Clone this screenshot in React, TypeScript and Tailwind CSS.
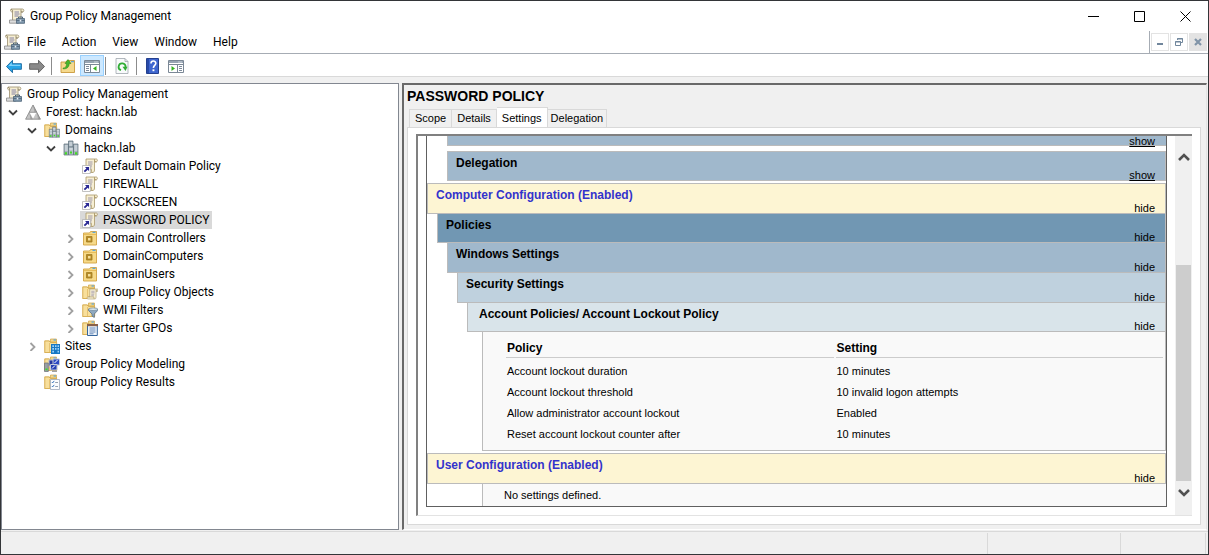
import React from "react";

type IconName =
  | "gpm" | "forest" | "domains" | "domain" | "gpo" | "ou" | "gpoFolder" | "wmi" | "starter" | "sites" | "modeling" | "results";

const Svg = ({ children }: { children: React.ReactNode }) => (
  <svg viewBox="0 0 16 16" className="size-4 shrink-0" aria-hidden="true">{children}</svg>
);

const Folder = () => (
  <>
    <path d="M.5 2.500h5l1 1h6.500v11.500H.5z" fill="#e3b95c" />
    <path d="M6.500 1h6v3h-6z" fill="#f3d88c" stroke="#d0a448" strokeWidth=".7" />
    <path d="M9.500 1.500h2.500v1H9.500z" fill="#3b9bea" />
    <path d="M.8 3h4.200l1.500 1.500h6.200v10H.8z" fill="#f8df9b" stroke="#d3a94f" strokeWidth=".8" />
    <path d="M5.500 5v9" stroke="#e6c272" />
  </>
);

const Servers = () => (
  <>
    <path d="M5.500 1h4.500v9H5.500z" fill="#a3b1bb" stroke="#596b77" strokeWidth=".7" />
    <path d="M1 4h4.500v11H1zM10.500 4H15v11h-4.500z" fill="#a3b1bb" stroke="#5c6d78" strokeWidth=".7" />
    <path d="M5.500 7h5v8h-5z" fill="#b6c2c9" stroke="#5c6d78" strokeWidth=".7" />
    <path d="M1.800 6h3M1.800 8h3M6.300 3h3M6.300 5h3M11.300 6h3M11.300 8h3M6.500 9h3M1.800 10h3M11.300 10h3" stroke="#eef2f5" strokeWidth=".9" />
    <path d="M1.800 12.200h2.200v2.200H1.800zM12 12.200h2.200v2.200H12zM7 11.500h2v2H7z" fill="#45dc25" />
  </>
);

const Scroll = () => (
  <>
    <path d="M4 1h10.500c1 0 1.300 2.500 0 2.800h-2V12c0 2-1 2.500-2 2.500H1.500c-1.500 0-1.500-3 .5-3h2z" fill="#f7efd3" stroke="#a8976a" strokeWidth=".8" />
    <path d="M12.500 1.200v2.600h2M2 11.600h7.500c0 1.500 0 2.500 1 2.900" fill="none" stroke="#a18d58" strokeWidth=".8" />
    <path d="M6 4h4.500M6 6h4.500M6 8h4M6 10h3.500" stroke="#8880a0" strokeWidth=".8" />
  </>
);

const drawings: Record<IconName, React.ReactNode> = {
  gpm: (
    <>
      <path d="M2 1h11.500c1.800 0 1.800 3 0 3H12v8.500H3.500V4C2 4 1 3 2 1z" fill="#f6eed2" stroke="#9a8d6c" strokeWidth=".8" />
      <path d="M2 1.500c1.500 0 2 1 1.500 2.500M12 1.500v2.500h2" fill="none" stroke="#8c7f60" strokeWidth=".8" />
      <path d="M5.500 4h4.500M5.500 6h5M5.500 8h4" stroke="#7774a0" strokeWidth=".9" />
      <path d="M.5 12h9v3.200h-9z" fill="#dcdcdc" stroke="#888" strokeWidth=".8" />
      <path d="M9.500 10.500V9h4v1.500" fill="none" stroke="#4a6075" />
      <path d="M7.500 10.500h8v4.800h-8z" fill="#8199ae" stroke="#4c6377" strokeWidth=".8" />
      <path d="M7.500 12.500h8" stroke="#4c6377" strokeWidth=".8" />
      <path d="M10.700 11.700h1.600v1.800h-1.600z" fill="#e8eef3" />
    </>
  ),
  forest: (
    <>
      <path d="M8 .8 15.500 15.200H.5z" fill="#c4c4c4" />
      <path d="M8 .8 12 8.300H9.500zM4.200 8.300 8 15.200H5.500zM11.800 8.300l3.700 6.900H13z" fill="#a2a2a2" />
      <path d="M4.500 8.300h7L8 14.700z" fill="#fff" />
      <path d="M8 1 15.400 15.200H.6zM4.300 8.300h7.400" fill="none" stroke="#858585" strokeWidth=".8" />
    </>
  ),
  domains: (
    <>
      <Folder />
      <g transform="translate(4.500 4.200) scale(.74)"><Servers /></g>
    </>
  ),
  domain: <Servers />,
  gpo: (
    <>
      <Scroll />
      <path d="M.5 7.500h7.800v8H.5z" fill="#fff" stroke="#a9a9a9" strokeWidth=".7" />
      <path d="M3 9h4v4L5.700 11.700 3 14.300 1.700 13l2.700-2.600z" fill="#2a2994" />
    </>
  ),
  ou: (
    <>
      <path d="M1.500 3h6l1-1.500h6v13.500h-13z" fill="#f6d988" stroke="#d2a444" strokeWidth=".9" />
      <path d="M10.500 1.800h3v1h-3z" fill="#3b9bea" />
      <path d="M2 4.500h12" stroke="#e6bd5c" />
      <path d="M4.500 6.500h5.500V12H4.500z" fill="#b58a26" stroke="#a17c22" strokeWidth=".8" />
      <path d="M6 8h2.500v2.500H6z" fill="#f7e09a" />
    </>
  ),
  gpoFolder: (
    <>
      <Folder />
      <g transform="translate(4.800 4.300) scale(.74)"><Scroll /></g>
    </>
  ),
  wmi: (
    <>
      <Folder />
      <path d="M6.500 7h9.200v1.500L12.300 12v3.500L10 14v-2L6.500 8.500z" fill="#8fa9c0" stroke="#51687e" strokeWidth=".7" />
      <ellipse cx="11.100" cy="7.200" rx="4.400" ry="1.300" fill="#dae8f2" stroke="#60788c" strokeWidth=".6" />
    </>
  ),
  starter: (
    <>
      <Folder />
      <path d="M5.500 4.500h9.800V15.500H5.500z" fill="#eef4fb" stroke="#34659c" />
      <path d="M5 4h11v2.200H5z" fill="#87604a" />
      <path d="M7.500 8h6M7.500 10h6M7.500 12h6M7.500 13.800h4" stroke="#436da4" strokeWidth=".8" />
    </>
  ),
  sites: (
    <>
      <Folder />
      <path d="M7 6h9v10H7z" fill="#1677c4" />
      <path d="M8.300 7.300h1.700V9H8.300zM11 7.300h1.500V9H11zM13.500 7.300H15V9h-1.500zM8.300 10h1.700v1.700H8.300zM11 10h1.500v1.700H11zM13.500 10H15v1.700h-1.500zM8.300 12.700h1.700v1.700H8.300zM13.500 12.700H15v1.700h-1.500z" fill="#9fd4fb" />
    </>
  ),
  modeling: (
    <>
      <Folder />
      <path d="M5 4h6v6H5z" fill="#24369d" stroke="#b9bfcf" />
      <path d="M9 3h6.500v6H9z" fill="#2b49c2" stroke="#c4cad8" />
      <path d="M6.500 8.500H13V14H6.500z" fill="#2540b4" stroke="#c5ccda" />
      <path d="m10.500 7 3-3M8 12.500l3-3" stroke="#fff" />
      <path d="M.5 7h3.800v8.500H.5z" fill="#989fa5" stroke="#686f75" strokeWidth=".7" />
      <path d="M1.500 12.500h2v1.800h-2z" fill="#3be12a" />
      <path d="M8 15.200h5" stroke="#777" />
    </>
  ),
  results: (
    <>
      <Folder />
      <path d="M6.500 5.500h9v10h-9z" fill="#fbfcfe" stroke="#9eaabd" strokeWidth=".8" />
      <path d="m7.800 8 .9.900 1.500-2M7.800 12l.9.900 1.500-2" fill="none" stroke="#2669b5" strokeWidth=".9" />
      <path d="M11.200 8.500H14M11.200 12.500H14" stroke="#8794a7" strokeWidth=".9" />
    </>
  ),
};

const Icon = ({ name }: { name: IconName }) => <Svg>{drawings[name]}</Svg>;

const Panes = ({ flip }: { flip?: boolean }) => (
  <Svg>
    <path d="M.5 2.500h15v12H.5z" fill="#fff" stroke="#7b8896" />
    <path d="M1 3h14v2H1z" fill="#97a4b3" />
    <path d="M10.500 4h1M12.500 4h1" stroke="#fff" />
    <path d={flip ? "M1 6.500h14M9.500 7v7.500" : "M1 6.500h14M6.500 7v7.500"} stroke="#7b8896" />
    {flip ? (
      <>
        <path d="M11 8.500h3M11 10.500h3M11 12.500h3" stroke="#7d8b9b" />
        <path d="M3.500 8 7 10.500 3.500 13z" fill="#35b320" />
      </>
    ) : (
      <>
        <path d="M2 8.500h3M2 10.500h3M2 12.500h3" stroke="#7d8b9b" />
        <path d="M12.500 8 9 10.500l3.500 2.500z" fill="#35b320" />
      </>
    )}
  </Svg>
);

const Arrow = ({ forward }: { forward?: boolean }) => (
  <Svg>
    {forward ? (
      <path d="M15.500 8.500 9.500 2.300v3.400H.6v5.600h8.900v3.400z" fill="#8a8a8a" stroke="#5c5c5c" strokeWidth=".9" />
    ) : (
      <>
        <path d="M.5 8.500l6-6.200v3.400h8.900v5.600H6.500v3.400z" fill="#28a4e6" stroke="#17679e" strokeWidth=".9" />
        <path d="M2.500 8 5.700 4.500v2.200h8.700V8z" fill="#81d2fa" />
      </>
    )}
  </Svg>
);

interface Node {
  label: string;
  icon: IconName;
  open?: boolean;
  closed?: boolean;
  selected?: boolean;
  children?: Node[];
}

const forest: Node = {
  label: "Forest: hackn.lab",
  icon: "forest",
  open: true,
  children: [
    {
      label: "Domains",
      icon: "domains",
      open: true,
      children: [
        {
          label: "hackn.lab",
          icon: "domain",
          open: true,
          children: [
            { label: "Default Domain Policy", icon: "gpo" },
            { label: "FIREWALL", icon: "gpo" },
            { label: "LOCKSCREEN", icon: "gpo" },
            { label: "PASSWORD POLICY", icon: "gpo", selected: true },
            { label: "Domain Controllers", icon: "ou", closed: true },
            { label: "DomainComputers", icon: "ou", closed: true },
            { label: "DomainUsers", icon: "ou", closed: true },
            { label: "Group Policy Objects", icon: "gpoFolder", closed: true },
            { label: "WMI Filters", icon: "wmi", closed: true },
            { label: "Starter GPOs", icon: "starter", closed: true },
          ],
        },
      ],
    },
    { label: "Sites", icon: "sites", closed: true },
    { label: "Group Policy Modeling", icon: "modeling" },
    { label: "Group Policy Results", icon: "results" },
  ],
};

const TreeItem = ({ node }: { node: Node }) => (
  <li role="treeitem" aria-selected={!!node.selected} aria-expanded={node.open ? true : node.closed ? false : undefined}>
    <div className="flex h-[18px] items-center gap-[3px]">
      {node.open || node.closed ? (
        <button type="button" aria-label={`Toggle ${node.label}`} className="flex h-4 w-3.5 items-center justify-center">
          <svg viewBox="0 0 10 10" className="size-2.5" fill="none" strokeWidth="1.800" aria-hidden="true">
            {node.open ? <path d="M1 3.500l4 4 4-4" stroke="#404040" /> : <path d="M3.500 2l4 4-4 4" stroke="#a0a0a0" />}
          </svg>
        </button>
      ) : (
        <span className="w-3.5" />
      )}
      <button
        type="button"
        className={`flex h-full items-center gap-[5px] whitespace-nowrap px-0.5 ${node.selected ? "bg-[#d9d9d9]" : ""}`}
      >
        <Icon name={node.icon} />
        {node.label}
      </button>
    </div>
    {node.children && (
      <ul role="group" className="pl-[19px]">
        {node.children.map((c) => <TreeItem key={c.label} node={c} />)}
      </ul>
    )}
  </li>
);

interface BarProps {
  title: string;
  action: "show" | "hide";
  className: string;
}

const Bar = ({ title, action, className }: BarProps) => (
  <div className={`flex justify-between border border-[#bbbbbb] pr-2.5 pl-2 ${className}`}>
    <h2 className="pt-[3px] text-xs leading-4 font-bold">{title}</h2>
    <a href="#report" className={`self-end pb-px leading-2 ${action === "show" ? "underline underline-offset-1" : ""}`}>{action}</a>
  </div>
);

const policies = [
  ["Account lockout duration", "10 minutes"],
  ["Account lockout threshold", "10 invalid logon attempts"],
  ["Allow administrator account lockout", "Enabled"],
  ["Reset account lockout counter after", "10 minutes"],
];

const Separator = () => <span className="h-[18px] w-px shrink-0 bg-[#8c8c8c]" />;

const Report = () => (
  <div className="mx-2 border-x border-b border-[#606060]">
    <div className="mb-[5px] ml-5 flex h-2.5 items-end justify-end border-b border-l border-[#bbbbbb] bg-[#a0b8cc] pr-[11px]">
      <a href="#report" className="leading-2 underline underline-offset-1">show</a>
    </div>
    <Bar title="Delegation" action="show" className="mb-0.5 ml-5 h-[30px] bg-[#a0b8cc]" />
    <Bar title="Computer Configuration (Enabled)" action="hide" className="h-[31px] bg-[#fdf5d3] [&>h2]:text-[#3333cc]" />
    <Bar title="Policies" action="hide" className="-mt-px ml-2.5 h-[30px] bg-[#7197b3]" />
    <Bar title="Windows Settings" action="hide" className="-mt-px ml-5 h-[31px] bg-[#a0b8cc]" />
    <Bar title="Security Settings" action="hide" className="-mt-px ml-[30px] h-[31px] bg-[#bfd1de]" />
    <Bar title="Account Policies/ Account Lockout Policy" action="hide" className="-mt-px ml-10 h-[30px] bg-[#d9e4ea] [&>h2]:pl-[3px]" />
    <div className="-mt-px mb-0.5 ml-[55px] border border-[#bbbbbb] bg-[#f9f9f9] pt-1 pb-1.5 pl-[21px]">
      <table className="w-full table-fixed border-separate border-spacing-x-0.5 border-spacing-y-0.5 text-left">
        <thead>
          <tr>
            <th scope="col" className="h-5 border-b border-[#cccccc] px-px text-xs leading-4 font-bold">Policy</th>
            <th scope="col" className="h-5 border-b border-[#cccccc] px-px text-xs leading-4 font-bold">Setting</th>
          </tr>
        </thead>
        <tbody>
          {policies.map(([policy, setting]) => (
            <tr key={policy}>
              <td className="h-[19px] px-px pt-0.5 leading-4">{policy}</td>
              <td className="h-[19px] px-px pt-0.5 leading-4">{setting}</td>
            </tr>
          ))}
        </tbody>
      </table>
    </div>
    <Bar title="User Configuration (Enabled)" action="hide" className="h-[31px] bg-[#fdf5d3] [&>h2]:text-[#3333cc]" />
    <p className="-mt-px ml-[55px] h-[23px] border-t border-l border-[#bbbbbb] bg-[#f9f9f9] pl-[21px] leading-[22px]">No settings defined.</p>
  </div>
);

const tab = "border border-[#d9d9d9] whitespace-nowrap";

export default function App() {
  return (
    <div className="flex h-screen flex-col overflow-hidden border border-[#333538] bg-[#f0f0f0] font-['Roboto','Noto_Sans',sans-serif] text-xs text-black">
      <header className="bg-white">
        <div className="flex h-[30px] items-center justify-between">
          <div className="flex items-center gap-[5px] pl-2">
            <Icon name="gpm" />
            <h1>Group Policy Management</h1>
          </div>
          <div className="flex h-full">
            <button type="button" aria-label="Minimize" className="flex w-[46px] items-center justify-center">
              <svg viewBox="0 0 11 11" className="size-[11px]" stroke="#000"><path d="M0 5.500h11" /></svg>
            </button>
            <button type="button" aria-label="Maximize" className="flex w-[46px] items-center justify-center">
              <svg viewBox="0 0 11 11" className="size-[11px]" stroke="#000" fill="none"><path d="M.5.5h10v10H.5z" /></svg>
            </button>
            <button type="button" aria-label="Close" className="flex w-[46px] items-center justify-center">
              <svg viewBox="0 0 11 11" className="size-[11px]" stroke="#000"><path d="m.5.5 10 10m0-10-10 10" /></svg>
            </button>
          </div>
        </div>
        <div className="flex h-[23px] items-center border-b border-[#a6acb4]">
          <div className="pl-[3px]"><Icon name="gpm" /></div>
          <nav className="flex flex-1 gap-4 pl-[7px]">
            {["File", "Action", "View", "Window", "Help"].map((m) => <button type="button" key={m}>{m}</button>)}
          </nav>
          <div className="flex h-full items-center gap-px border-l border-[#a6acb4] pr-px pl-px">
            <button type="button" aria-label="Minimize console" className="flex size-[18px] items-center justify-center border border-[#e3e3e3]">
              <svg viewBox="0 0 10 10" className="size-2.5"><path d="M2 6h6v2H2z" fill="#71869c" /></svg>
            </button>
            <button type="button" aria-label="Restore console" className="flex size-[18px] items-center justify-center border border-[#e3e3e3]">
              <svg viewBox="0 0 10 10" className="size-2.5" fill="none" stroke="#71869c"><path d="M3.500 3V1.500h5v4H7M1.500 4.500h5v4h-5zM3 2h6M1 5h6" /></svg>
            </button>
            <button type="button" aria-label="Close console" className="flex size-[18px] items-center justify-center bg-[#e3e3e3]">
              <svg viewBox="0 0 10 10" className="size-2.5" stroke="#8094a8" strokeWidth="2.200"><path d="m2 2 6 6m0-6-6 6" /></svg>
            </button>
          </div>
        </div>
        <div role="toolbar" aria-label="Console" className="flex h-[23px] items-center border-b border-[#d9d9d9] pt-px pl-[5px]">
          <button type="button" aria-label="Back" className="mr-[7px]"><Arrow /></button>
          <button type="button" aria-label="Forward" className="mr-1.5"><Arrow forward /></button>
          <Separator />
          <button type="button" aria-label="Up one level" className="mr-1 ml-2">
            <Svg>
              <path d="M1 4h5l1-1.500h7.500V14.500H1z" fill="#f5d98c" stroke="#c99a3c" strokeWidth=".9" />
              <path d="M11 3.200h3v1h-3z" fill="#3b9bea" />
              <path d="M3 10c3 0 3.500-2 3.500-4.500H5L8 1.500l3 4H9.200c0 3.500-2.200 5.700-6.200 5.300z" fill="#45b52b" stroke="#278315" strokeWidth=".5" />
            </Svg>
          </button>
          <button type="button" aria-label="Show console tree" aria-pressed="true" className="mr-px flex h-[21px] w-6 items-center justify-center border border-[#99d1ff] bg-[#cce8ff]">
            <Panes />
          </button>
          <Separator />
          <button type="button" aria-label="Refresh" className="mr-1.5 ml-2">
            <Svg>
              <path d="M2 .5h9l3 3v12H2z" fill="#f8fafb" stroke="#a0a6ad" strokeWidth=".8" />
              <path d="M11 .5v3h3" fill="none" stroke="#a0a6ad" strokeWidth=".8" />
              <path d="M7 12.200A3.500 3.500 0 1 1 11.600 9" fill="none" stroke="#31ad36" strokeWidth="1.800" />
              <path d="M8.500 8.800h5L11.500 13z" fill="#31ad36" />
            </Svg>
          </button>
          <Separator />
          <button type="button" aria-label="Help" className="mr-[7px] ml-2">
            <Svg>
              <path d="M1.500.5h12v15h-12z" fill="#3f66cf" stroke="#24408f" />
              <path d="M2 1h2v14H2z" fill="#274aa8" />
              <path d="M6 5.500c0-3.300 4.800-3.100 4.800-.3 0 2.100-2.400 2.300-2.400 4.800" fill="none" stroke="#fff" strokeWidth="1.600" />
              <path d="M7.500 11.300h1.900v1.900H7.500z" fill="#fff" />
            </Svg>
          </button>
          <button type="button" aria-label="Show action pane"><Panes flip /></button>
        </div>
      </header>

      <main className="mt-1.5 flex min-h-0 flex-1 gap-[3px]">
        <section aria-label="Console tree" className="w-[398px] shrink-0 border border-[#828790] bg-white pt-px pl-1">
          <div className="flex h-[18px] items-center gap-[5px]"><Icon name="gpm" />Group Policy Management</div>
          <ul role="tree"><TreeItem node={forest} /></ul>
        </section>

        <section className="mr-px flex min-w-0 flex-1 flex-col border-t-2 border-r border-b border-l-2 border-t-[#696969] border-r-[#e3e3e3] border-b-white border-l-[#696969] pr-[5px] pb-1 pl-[3px] font-['Liberation_Sans',Arial,sans-serif] text-[11px]">
          <h2 className="h-[22px] text-sm leading-[22px] font-bold">PASSWORD POLICY</h2>
          <div role="tablist" className="flex items-end pl-0.5">
            <button type="button" role="tab" className={`${tab} h-[18px] border-b-0 px-[5px]`}>Scope</button>
            <button type="button" role="tab" className={`${tab} h-[18px] border-b-0 border-l-0 px-[5px]`}>Details</button>
            <button type="button" role="tab" aria-selected="true" className={`${tab} -mb-px h-[21px] border-b-0 border-l-0 bg-white px-[5px]`}>Settings</button>
            <button type="button" role="tab" className={`${tab} h-[18px] border-b-0 border-l-0 px-[3px]`}>Delegation</button>
          </div>
          <div role="tabpanel" className="flex min-h-0 flex-1 border border-[#d9d9d9] bg-white px-2 pt-1.5 pb-2">
            <div className="flex min-h-0 min-w-0 flex-1 border-t-2 border-b border-l-2 border-t-[#808080] border-b-[#e3e3e3] border-l-[#808080]">
              <div id="report" className="min-w-0 flex-1 overflow-hidden"><Report /></div>
              <div className="flex w-[17px] flex-col bg-[#f0f0f0] pt-3 pb-2.5">
                <button type="button" aria-label="Scroll up" className="flex h-[18px] items-center justify-center">
                  <svg viewBox="0 0 12 10" className="h-2.5 w-3" fill="none" stroke="#505050" strokeWidth="2.600"><path d="m1 8 5-5 5 5" /></svg>
                </button>
                <div className="flex flex-1 flex-col justify-end px-px"><div className="h-[216px] bg-[#cdcdcd]" /></div>
                <button type="button" aria-label="Scroll down" className="flex h-6 items-center justify-center">
                  <svg viewBox="0 0 12 10" className="h-2.5 w-3" fill="none" stroke="#505050" strokeWidth="2.600"><path d="m1 2 5 5 5-5" /></svg>
                </button>
              </div>
            </div>
          </div>
        </section>
      </main>

      <footer className="mt-px flex h-[23px] shrink-0 justify-end border-t border-[#d9d9d9] pt-px pr-0.5">
        <div className="w-[133px] border-l border-[#d9d9d9]" />
        <div className="w-[86px] border-x border-[#d9d9d9]" />
      </footer>
    </div>
  );
}
